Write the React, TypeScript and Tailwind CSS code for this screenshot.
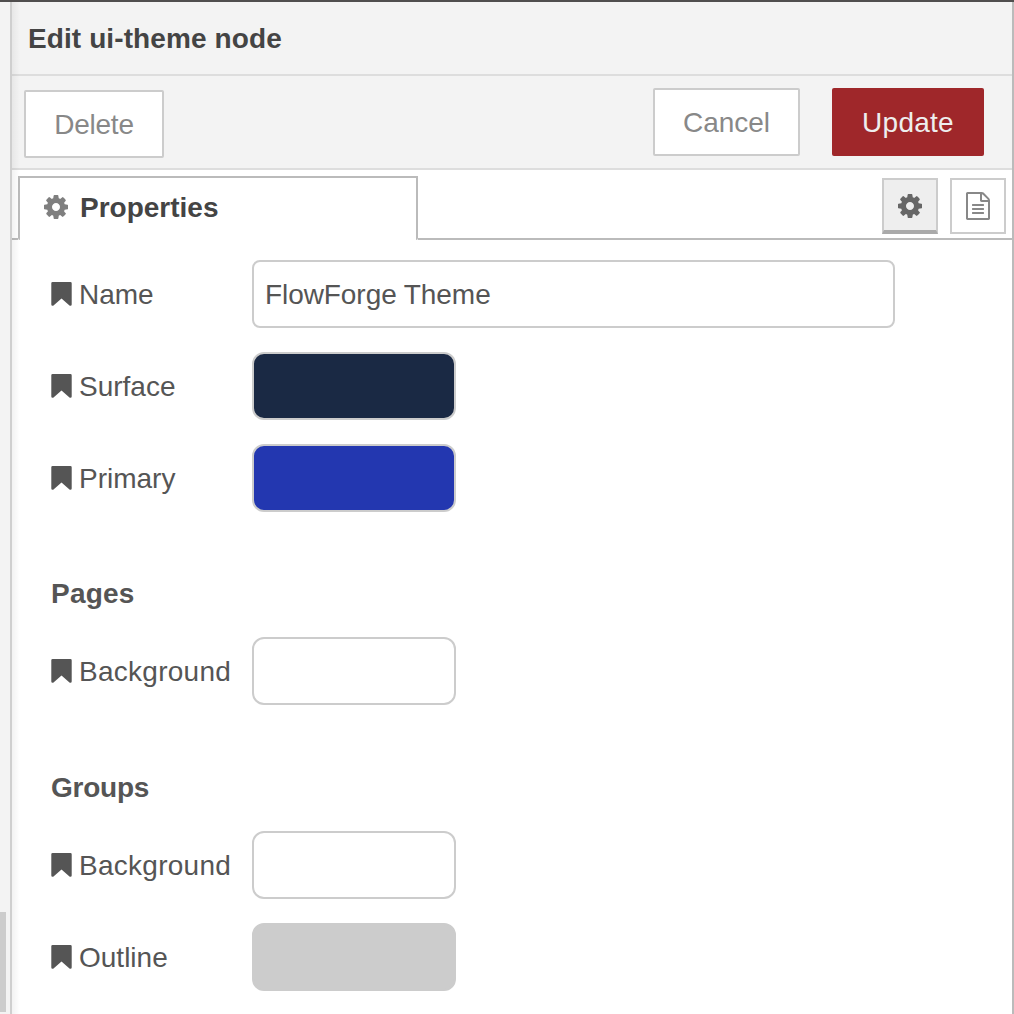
import React from "react";

function CogIcon({ className }: { className: string }) {
  return (
    <svg viewBox="0 -128 1536 1536" className={className} fill="currentColor" fillRule="evenodd">
      <path d="M1024 640q0-106-75-181t-181-75-181 75-75 181 75 181 181 75 181-75 75-181zm512-109v222q0 12-8 23t-20 13l-185 28q-19 54-39 91 35 50 107 138 10 12 10 25t-9 23q-27 37-99 108t-94 71q-12 0-26-9l-138-108q-44 23-91 38-16 136-29 186-7 28-36 28h-222q-14 0-24.500-8.500t-11.500-21.500l-28-184q-49-16-90-37l-141 107q-10 9-25 9-14 0-25-11-126-114-165-168-7-10-7-23 0-12 8-23 15-21 51-66.500t54-70.500q-27-50-41-99l-183-27q-13-2-21-12.500t-8-23.500v-222q0-12 8-23t19-13l186-28q14-46 39-92-40-57-107-138-10-12-10-24 0-10 9-23 26-36 98.500-107.500t94.500-71.500q13 0 26 10l138 107q44-23 91-38 16-136 29-186 7-28 36-28h222q14 0 24.500 8.500t11.500 21.500l28 184q49 16 90 37l142-107q9-9 24-9 13 0 25 10 129 119 165 170 7 8 7 22 0 12-8 23-15 21-51 66.500t-54 70.500q26 50 41 98l183 28q13 2 21 12.500t8 23.500z" />
    </svg>
  );
}

function BookmarkIcon() {
  return (
    <svg viewBox="0 0 21 24" className="h-[24px] w-[21px] shrink-0" fill="currentColor">
      <path d="M1.600 0H19.400Q20.700 0 20.700 1.300V22.500Q20.700 23.800 19.500 23.800Q18.800 23.800 18.200 23.300L10.500 16.500L2.800 23.300Q2.200 23.800 1.500 23.800Q0.300 23.800 0.300 22.500V1.300Q0.300 0 1.600 0Z" />
    </svg>
  );
}

function FileTextIcon() {
  return (
    <svg viewBox="0 0 1536 1792" className="h-7 w-6" fill="currentColor">
      <path d="M1468 380q28 28 48 76t20 88v1152q0 40-28 68t-68 28h-1344q-40 0-68-28t-28-68v-1600q0-40 28-68t68-28h896q40 0 88 20t76 48zm-444-244v376h376q-10-29-22-41l-313-313q-12-12-41-22zm384 1528v-1024h-416q-40 0-68-28t-28-68v-416h-768v1536h1280zm-1024-864q0-14 9-23t23-9h704q14 0 23 9t9 23v64q0 14-9 23t-23 9h-704q-14 0-23-9t-9-23v-64zm736 224q14 0 23 9t9 23v64q0 14-9 23t-23 9h-704q-14 0-23-9t-9-23v-64q0-14 9-23t23-9h704zm0 256q14 0 23 9t9 23v64q0 14-9 23t-23 9h-704q-14 0-23-9t-9-23v-64q0-14 9-23t23-9h704z" />
    </svg>
  );
}

function Row({ label, spacing = "", children }: { label: string; spacing?: string; children: React.ReactNode }) {
  return (
    <div className="flex h-[68px] items-center">
      <div className="flex w-[201px] shrink-0 items-center">
        <BookmarkIcon />
        <span className={"ml-[7px] whitespace-nowrap pt-[2px] " + spacing}>{label}</span>
      </div>
      {children}
    </div>
  );
}

function Swatch({ color }: { color: string }) {
  return <div className={"h-[68px] w-[204px] rounded-[12px] border-2 border-[#ccc] " + color} />;
}

export default function App() {
  return (
    <div className="flex h-[1014px] w-[1014px] flex-col overflow-hidden border-t-2 border-[#504e4e] bg-white font-['Liberation_Sans',Arial,sans-serif] text-[28px] leading-[40px] text-[#555]">
      <div className="flex min-h-0 flex-1">
        <div className="flex w-[10px] shrink-0 flex-col justify-end bg-[#f3f3f3]">
          <div className="mb-[2px] h-[100px] w-[6px] bg-[#ccc]" />
        </div>
        <div className="relative flex min-w-0 flex-1 flex-col border-l-2 border-r-2 border-l-[#cfcfcf] border-r-[#bbb]">
          <header className="flex h-[74px] shrink-0 items-center border-b-2 border-[#ddd] bg-[#f3f3f3] pl-4 font-bold text-[#444]">
            <span className="pt-[2px] tracking-[0.1px]">Edit ui-theme node</span>
          </header>
          <div className="flex h-[94px] shrink-0 items-start border-b-2 border-[#ddd] bg-[#f3f3f3] pl-3 pr-[28px] pt-3 text-[#888]">
            <button className="mt-[2px] h-[68px] w-[140px] rounded-[2px] border-2 border-[#ccc] bg-white pt-[2px] tracking-[-0.25px]">Delete</button>
            <button className="ml-auto h-[68px] w-[147px] rounded-[2px] border-2 border-[#ccc] bg-white pt-[2px]">Cancel</button>
            <button className="ml-8 h-[68px] w-[152px] rounded-[2px] bg-[#9f272a] pt-[2px] tracking-[0.25px] text-[#eee]">Update</button>
          </div>
          <div className="flex h-[70px] shrink-0 items-end">
            <div className="w-[6px] border-b-2 border-[#bbb]" />
            <div className="flex h-[64px] w-[400px] items-start rounded-b-[2px] border-x-2 border-t-2 border-[#bbb] pl-6 font-bold text-[#444]">
              <CogIcon className="mt-[17px] h-6 w-6 text-[#7f7f7f]" />
              <span className="ml-3 mt-[10px]">Properties</span>
            </div>
            <div className="flex h-[70px] flex-1 items-start justify-end gap-3 border-b-2 border-[#bbb] pr-[6px] pt-2">
              <button className="flex h-14 w-14 items-center justify-center border-2 border-b-4 border-[#ccc] border-b-[#aaa] bg-[#eee] pt-[2px] text-[#666]">
                <CogIcon className="h-6 w-6" />
              </button>
              <button className="flex h-14 w-14 items-center justify-center border-2 border-[#ccc] bg-white text-[#888]">
                <FileTextIcon />
              </button>
            </div>
          </div>
          <div className="flex flex-col pl-[39px] pt-5">
            <div className="flex flex-col gap-6">
              <Row label="Name">
                <input
                  readOnly
                  value="FlowForge Theme"
                  className="h-[68px] w-[643px] rounded-[8px] border-2 border-[#ccc] bg-white pl-[11px] pr-3 pt-[2px] tracking-[-0.07px] outline-none"
                />
              </Row>
              <Row label="Surface">
                <Swatch color="bg-[#1a2944]" />
              </Row>
              <Row label="Primary">
                <Swatch color="bg-[#2337b0]" />
              </Row>
            </div>
            <h4 className="mt-[62px] mb-[23px] h-10 font-bold tracking-[0.2px]">Pages</h4>
            <Row label="Background" spacing="tracking-[0.27px]">
              <Swatch color="bg-white" />
            </Row>
            <h4 className="mt-[63px] mb-[23px] h-10 font-bold tracking-[-0.25px]">Groups</h4>
            <div className="flex flex-col gap-6">
              <Row label="Background" spacing="tracking-[0.27px]">
                <Swatch color="bg-white" />
              </Row>
              <Row label="Outline">
                <Swatch color="bg-[#ccc]" />
              </Row>
            </div>
          </div>
          <div className="pointer-events-none absolute inset-y-0 left-0 w-2 bg-gradient-to-r from-black/5 to-transparent" />
        </div>
      </div>
    </div>
  );
}
